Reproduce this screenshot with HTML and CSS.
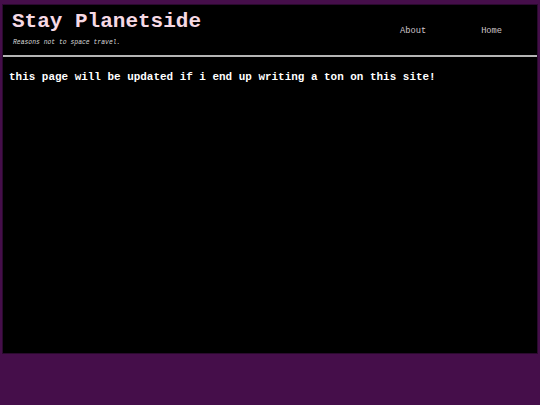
FILE: index.html
```html
<!DOCTYPE html>
<html>
<head>
<meta charset="utf-8">
<link rel="stylesheet" href="styles.css">
</head>
<body>
<div class="page">
  <header class="header">
    <div class="brand">
      <h1 class="title">Stay Planetside</h1>
      <p class="tagline">Reasons not to space travel.</p>
    </div>
    <nav class="nav">
      <a class="nav-link" href="#">About</a>
      <a class="nav-link" href="#">Home</a>
    </nav>
  </header>
  <main class="content">
    <p class="note">this page will be updated if i end up writing a ton on this site!</p>
  </main>
</div>
</body>
</html>
```
FILE: styles.css
```css
html, body {
  margin: 0;
  padding: 0;
  background: #450e4a;
  height: 100%;
}
body {
  padding: 4px 2px 0 2px;
  box-sizing: border-box;
  font-family: "Liberation Mono", monospace;
}
.page {
  background: #000;
  height: 350px;
  border: 1px solid #2a0a2e;
  box-sizing: border-box;
}
.header {
  display: flex;
  justify-content: space-between;
  align-items: flex-start;
  border-bottom: 2px solid #b4b4b4;
  height: 52px;
  box-sizing: border-box;
}
.brand {
  padding: 5px 0 0 9px;
}
.title {
  margin: 0;
  font-size: 21px;
  line-height: 24px;
  font-weight: bold;
  color: #f6d9e4;
}
.tagline {
  margin: 5px 0 0 1px;
  font-size: 6.4px;
  font-style: italic;
  color: #d8d8d8;
  line-height: 8px;
}
.nav {
  display: flex;
  gap: 55px;
  padding: 21px 35px 0 0;
}
.nav-link {
  color: #cfc6cc;
  text-decoration: none;
  font-size: 8.7px;
  line-height: 10px;
}
.content {
  padding: 12px 6px;
}
.note {
  margin: 0;
  color: #fff;
  font-weight: bold;
  font-size: 10.95px;
  line-height: 16px;
}
```
